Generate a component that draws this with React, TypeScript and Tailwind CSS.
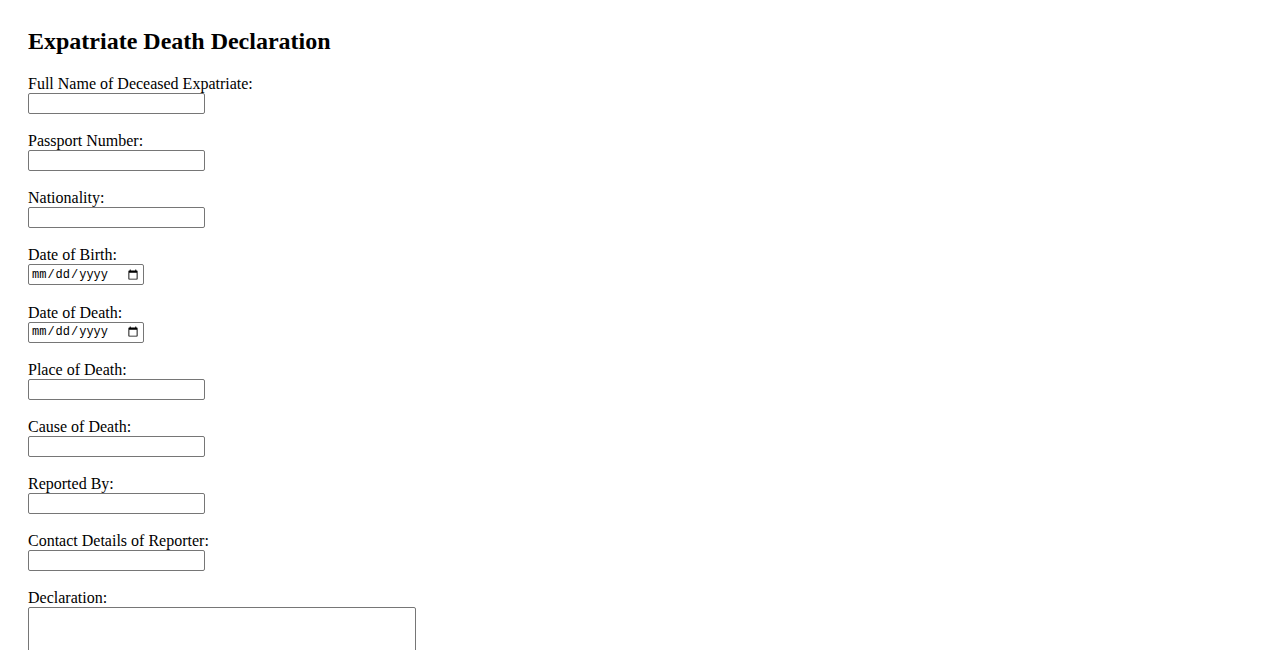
const fields: { label: string; type: "text" | "date" }[] = [
  { label: "Full Name of Deceased Expatriate:", type: "text" },
  { label: "Passport Number:", type: "text" },
  { label: "Nationality:", type: "text" },
  { label: "Date of Birth:", type: "date" },
  { label: "Date of Death:", type: "date" },
  { label: "Place of Death:", type: "text" },
  { label: "Cause of Death:", type: "text" },
  { label: "Reported By:", type: "text" },
  { label: "Contact Details of Reporter:", type: "text" },
];

export default function App() {
  return (
    <div className="min-h-screen bg-white px-[28px] pt-[27px] font-['Liberation_Serif',serif] text-black">
      <h2 className="mb-[20px] text-[24px] font-bold leading-[28px]">Expatriate Death Declaration</h2>
      <form>
        {fields.map((f) =>
          f.type === "date" ? (
            <div key={f.label} className="mb-[18.5px]">
              <label className="block text-[16px] leading-[18px]">{f.label}</label>
              <input
                type="date"
                className="block h-[21px] w-[116px] rounded-[2px] border border-[#767676] px-[2px] font-['Liberation_Mono',monospace] text-[12px] text-black"
              />
            </div>
          ) : (
            <div key={f.label} className="mb-[18px]">
              <label className="block text-[16px] leading-[18px]">{f.label}</label>
              <input
                type="text"
                className="block h-[21px] w-[177px] rounded-[2px] border border-[#767676] px-[2px] font-['Liberation_Sans',sans-serif] text-[13.33px]"
              />
            </div>
          )
        )}
        <div className="mb-[18px]">
          <label className="block text-[16px] leading-[18px]">Declaration:</label>
          <textarea className="block h-[80px] w-[388px] rounded-[2px] border border-[#767676] px-[2px] font-['Liberation_Mono',monospace] text-[13.33px]" />
        </div>
      </form>
    </div>
  );
}
